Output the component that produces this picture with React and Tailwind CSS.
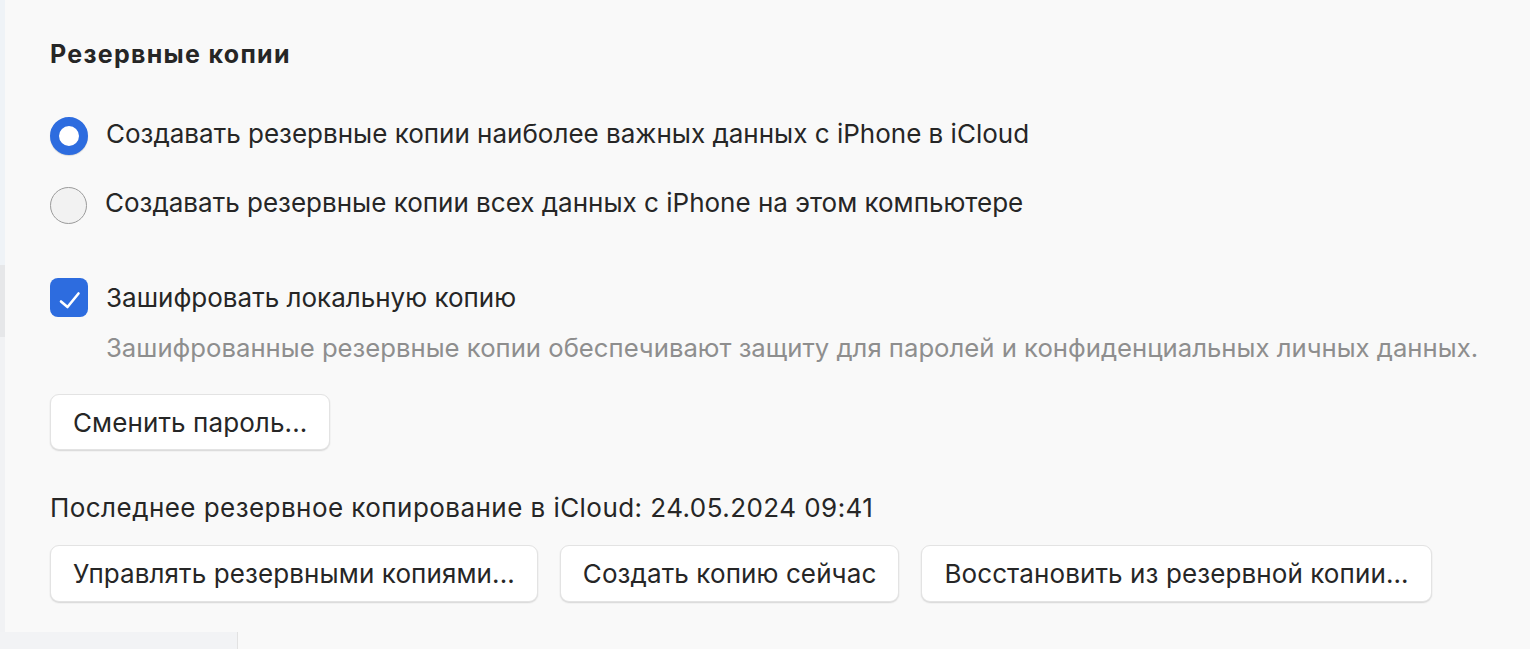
const font = { fontFamily: "Inter, 'Noto Sans', sans-serif" };

const Radio = ({ checked }) =>
  checked ? (
    <div className="w-[38px] h-[38px] rounded-full border-[9px] border-[#2d6cdf] bg-white shadow-[0_1px_1px_rgba(0,0,0,0.15)] shrink-0" />
  ) : (
    <div className="w-[37px] h-[37px] rounded-full border-[1.5px] border-[#9b9b9b] bg-[#f2f2f2] shrink-0" />
  );

const Button = ({ children }) => (
  <button className="h-full px-[22px] rounded-[9px] bg-white border border-[#e3e3e3] shadow-[0_1px_1.5px_rgba(0,0,0,0.14)] text-[26px] tracking-[0.1px] text-[#262626] whitespace-nowrap">
    {children}
  </button>
);

export default function App() {
  return (
    <div className="w-[1530px] h-[649px] flex flex-col bg-[#f9f9f9] overflow-hidden" style={font}>
      <div className="flex h-[632px]">
        {/* sidebar edge */}
        <div className="w-[5px] flex flex-col">
          <div className="h-[265px] bg-[#eff3f7]" />
          <div className="h-[72px] bg-[#e6e7e9]" />
          <div className="flex-1 bg-[#f1f2f4]" />
        </div>

        <div className="flex-1 flex flex-col pl-[45px] text-[#262626]">
          <h2 className="mt-[39px] h-[30px] leading-[30px] text-[25px] font-bold tracking-[1.3px]">Резервные копии</h2>

          <div className="mt-[47px] h-[40px] flex items-center gap-[18px]">
            <Radio checked />
            <span className="text-[26px] leading-[30px] pb-[4px]">
              Создавать резервные копии наиболее важных данных с iPhone в iCloud
            </span>
          </div>

          <div className="mt-[29px] h-[40px] flex items-center gap-[18px]">
            <Radio />
            <span className="text-[26px] leading-[30px] pb-[4px]">
              Создавать резервные копии всех данных с iPhone на этом компьютере
            </span>
          </div>

          <div className="mt-[53px] h-[39px] flex items-center gap-[18px]">
            <div className="w-[38px] h-[39px] rounded-[8px] bg-[#2d6cdf] flex items-center justify-center shrink-0">
              <svg width="38" height="38" viewBox="0 0 38 38" fill="none">
                <path d="M11 22.5 L17.5 28 L28.5 14.5" stroke="white" strokeWidth="2.6" strokeLinecap="round" strokeLinejoin="round" />
              </svg>
            </div>
            <span className="text-[26px] leading-[30px]">Зашифровать локальную копию</span>
          </div>

          <p className="mt-[16px] h-[30px] leading-[30px] pl-[56px] text-[25.7px] text-[#8e8e8e] whitespace-nowrap">
            Зашифрованные резервные копии обеспечивают защиту для паролей и конфиденциальных личных данных.
          </p>

          <div className="mt-[31px] h-[56px] flex">
            <Button>Сменить пароль...</Button>
          </div>

          <p className="mt-[43px] h-[30px] leading-[30px] text-[26px] tracking-[0.45px]">
            Последнее резервное копирование в iCloud: 24.05.2024 09:41
          </p>

          <div className="mt-[22px] h-[57px] flex gap-[22px]">
            <Button>Управлять резервными копиями...</Button>
            <Button>Создать копию сейчас</Button>
            <Button>Восстановить из резервной копии...</Button>
          </div>
        </div>
      </div>

      <div className="flex h-[17px]">
        <div className="w-[238px] bg-[#f2f3f5] border-r border-[#e2e2e2]" />
        <div className="flex-1 bg-[#f9f9f9]" />
      </div>
    </div>
  );
}
